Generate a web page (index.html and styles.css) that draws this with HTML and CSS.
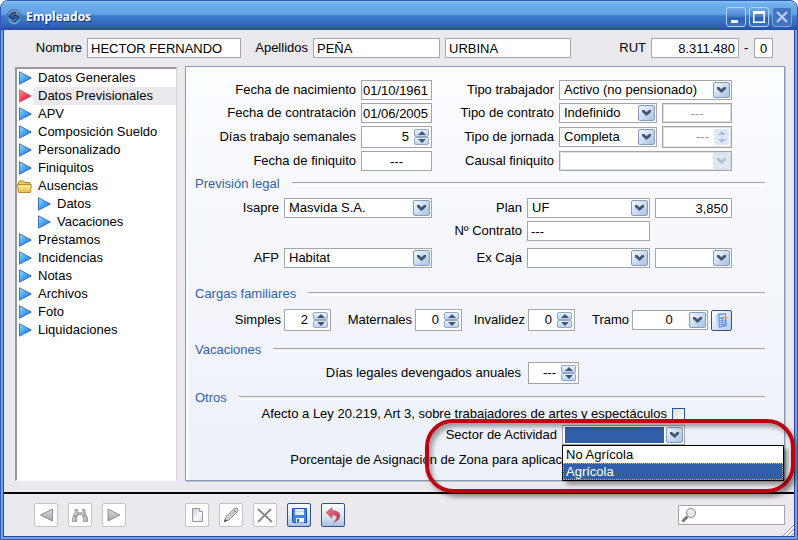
FILE: index.html
```html
<!DOCTYPE html>
<html lang="es">
<head>
<meta charset="utf-8">
<title>Empleados</title>
<link rel="stylesheet" href="styles.css">
</head>
<body>
<svg class="defs" aria-hidden="true">
  <defs>
    <linearGradient id="g-blue" x1="0" y1="0" x2="1" y2="1"><stop offset="0" stop-color="#a8dcff"/><stop offset=".5" stop-color="#3fa0f8"/><stop offset="1" stop-color="#1f7cf0"/></linearGradient>
    <linearGradient id="g-red" x1="0" y1="0" x2="1" y2="1"><stop offset="0" stop-color="#ffa0a0"/><stop offset=".5" stop-color="#f83c48"/><stop offset="1" stop-color="#e01828"/></linearGradient>
    <linearGradient id="g-gray" x1="0" y1="0" x2="0" y2="1"><stop offset="0" stop-color="#dcdcdc"/><stop offset="1" stop-color="#a4a4a4"/></linearGradient>
    <linearGradient id="g-gold" x1="0" y1="0" x2="0" y2="1"><stop offset="0" stop-color="#fff0a0"/><stop offset="1" stop-color="#e8bc48"/></linearGradient>
    <linearGradient id="g-page" x1="0" y1="0" x2="1" y2="1"><stop offset="0" stop-color="#c8c8d0"/><stop offset=".6" stop-color="#fafafc"/><stop offset="1" stop-color="#dcdce2"/></linearGradient>
    <linearGradient id="g-undo" x1="0" y1="0" x2="1" y2="1"><stop offset="0" stop-color="#f4707c"/><stop offset="1" stop-color="#a83c60"/></linearGradient>
    <linearGradient id="g-orb" x1="0" y1="0" x2="0" y2="1"><stop offset="0" stop-color="#8c9cb8"/><stop offset=".5" stop-color="#3c78b8"/><stop offset="1" stop-color="#68b4e4"/></linearGradient>
  </defs>
  <symbol id="i-blue" viewBox="0 0 13 14"><path d="M.5.8v12.4L12.3 7z" fill="url(#g-blue)" stroke="#3c74b4"/></symbol>
  <symbol id="i-red" viewBox="0 0 13 14"><path d="M.5.8v12.4L12.3 7z" fill="url(#g-red)" stroke="#d06078"/></symbol>
  <symbol id="i-folder" viewBox="0 0 15 13"><path d="M1.5 11.5v-9l1-1.5h4l1 1.5h5.5v2" fill="#f0cc60" stroke="#b08418"/><path d="M1.5 12.5l-1-8h13.8l-.8 8z" fill="url(#g-gold)" stroke="#b88c20"/></symbol>
  <symbol id="i-down" viewBox="0 0 9 6"><path d="M0 0h2l2.500 2.300L7 0h2v2L4.500 6 0 2z"/></symbol>
  <symbol id="i-caret" viewBox="0 0 8 4"><path d="M4 0l4 4H0z"/></symbol>
</svg>

<div class="window">
  <header class="titlebar">
    <svg class="logo" viewBox="0 0 16 16"><circle cx="8" cy="8" r="7.500" fill="url(#g-orb)" stroke="#4470a8" stroke-width=".8"/><path d="M10 3.500L7 3.500 3.500 7.500 7 10.500 9.500 8M6 12.500l3-.2L12.500 8.500 9 5.500 6.500 8" fill="none" stroke="#15305e" stroke-width="1.200"/></svg>
    <h1>Empleados</h1>
    <div class="controls">
      <button type="button" aria-label="Minimizar"><svg viewBox="0 0 20 20"><path d="M5 13h7v3H5z" fill="#fff"/></svg></button>
      <button type="button" aria-label="Maximizar"><svg viewBox="0 0 20 20"><path d="M4 4h12v12H4zM5.500 7v7.500h9V7z" fill="#fff" fill-rule="evenodd"/></svg></button>
      <button type="button" class="dim" aria-label="Cerrar"><svg viewBox="0 0 20 20"><path d="M5 5l10 10M15 5L5 15" stroke="#c3d3ec" stroke-width="2"/></svg></button>
    </div>
  </header>

  <div class="client">
    <div class="person">
      <label for="nombre">Nombre</label>
      <input id="nombre" class="field" value="HECTOR FERNANDO">
      <label for="apellido1">Apellidos</label>
      <input id="apellido1" class="field" value="PEÑA">
      <input class="field" value="URBINA" aria-label="Segundo apellido">
      <label for="rut">RUT</label>
      <input id="rut" class="field num" value="8.311.480">
      <span>-</span>
      <input class="field mid" value="0" aria-label="Dígito verificador">
    </div>

    <div class="main">
      <nav class="tree">
        <a href="#"><svg><use href="#i-blue"/></svg><span>Datos Generales</span></a>
        <a href="#" class="current"><svg><use href="#i-red"/></svg><span>Datos Previsionales</span></a>
        <a href="#"><svg><use href="#i-blue"/></svg><span>APV</span></a>
        <a href="#"><svg><use href="#i-blue"/></svg><span>Composición Sueldo</span></a>
        <a href="#"><svg><use href="#i-blue"/></svg><span>Personalizado</span></a>
        <a href="#"><svg><use href="#i-blue"/></svg><span>Finiquitos</span></a>
        <a href="#" class="folder"><svg><use href="#i-folder"/></svg><span>Ausencias</span></a>
        <a href="#" class="child"><svg><use href="#i-blue"/></svg><span>Datos</span></a>
        <a href="#" class="child"><svg><use href="#i-blue"/></svg><span>Vacaciones</span></a>
        <a href="#"><svg><use href="#i-blue"/></svg><span>Préstamos</span></a>
        <a href="#"><svg><use href="#i-blue"/></svg><span>Incidencias</span></a>
        <a href="#"><svg><use href="#i-blue"/></svg><span>Notas</span></a>
        <a href="#"><svg><use href="#i-blue"/></svg><span>Archivos</span></a>
        <a href="#"><svg><use href="#i-blue"/></svg><span>Foto</span></a>
        <a href="#"><svg><use href="#i-blue"/></svg><span>Liquidaciones</span></a>
      </nav>

      <form class="panel">
        <div class="grid general">
          <label for="nac">Fecha de nacimiento</label>
          <input id="nac" class="field date" value="01/10/1961">
          <label for="trab">Tipo trabajador</label>
          <div class="combo wide"><select id="trab"><option>Activo (no pensionado)</option></select><svg><use href="#i-down"/></svg></div>

          <label for="cont">Fecha de contratación</label>
          <input id="cont" class="field date" value="01/06/2005">
          <label for="tcont">Tipo de contrato</label>
          <div class="combo"><select id="tcont"><option>Indefinido</option></select><svg><use href="#i-down"/></svg></div>
          <input class="field mid" value="---" disabled aria-label="Término de contrato">

          <label for="dias">Días trabajo semanales</label>
          <div class="spin"><input id="dias" value="5"><button type="button" aria-label="Más"><svg><use href="#i-caret"/></svg></button><button type="button" aria-label="Menos"><svg><use href="#i-caret"/></svg></button></div>
          <label for="jorn">Tipo de jornada</label>
          <div class="combo"><select id="jorn"><option>Completa</option></select><svg><use href="#i-down"/></svg></div>
          <div class="spin off"><input value="---" disabled aria-label="Horas de jornada"><button type="button" disabled aria-label="Más"><svg><use href="#i-caret"/></svg></button><button type="button" disabled aria-label="Menos"><svg><use href="#i-caret"/></svg></button></div>

          <label for="fin">Fecha de finiquito</label>
          <input id="fin" class="field mid" value="---">
          <label for="causal">Causal finiquito</label>
          <div class="combo wide off"><select id="causal" disabled><option></option></select><svg><use href="#i-down"/></svg></div>
        </div>

        <h2>Previsión legal</h2>
        <div class="grid legal">
          <label for="isapre">Isapre</label>
          <div class="combo"><select id="isapre"><option>Masvida S.A.</option></select><svg><use href="#i-down"/></svg></div>
          <label for="plan">Plan</label>
          <div class="combo"><select id="plan"><option>UF</option></select><svg><use href="#i-down"/></svg></div>
          <input class="field num" value="3,850" aria-label="Valor del plan">

          <label for="ncont" class="third">Nº Contrato</label>
          <input id="ncont" class="field" value="---">

          <label for="afp" class="first">AFP</label>
          <div class="combo"><select id="afp"><option>Habitat</option></select><svg><use href="#i-down"/></svg></div>
          <label for="excaja">Ex Caja</label>
          <div class="combo"><select id="excaja"><option></option></select><svg><use href="#i-down"/></svg></div>
          <div class="combo"><select aria-label="Régimen Ex Caja"><option></option></select><svg><use href="#i-down"/></svg></div>
        </div>

        <h2>Cargas familiares</h2>
        <div class="grid cargas">
          <label for="simples">Simples</label>
          <div class="spin"><input id="simples" value="2"><button type="button" aria-label="Más"><svg><use href="#i-caret"/></svg></button><button type="button" aria-label="Menos"><svg><use href="#i-caret"/></svg></button></div>
          <label for="mat">Maternales</label>
          <div class="spin"><input id="mat" value="0"><button type="button" aria-label="Más"><svg><use href="#i-caret"/></svg></button><button type="button" aria-label="Menos"><svg><use href="#i-caret"/></svg></button></div>
          <label for="inv">Invalidez</label>
          <div class="spin"><input id="inv" value="0"><button type="button" aria-label="Más"><svg><use href="#i-caret"/></svg></button><button type="button" aria-label="Menos"><svg><use href="#i-caret"/></svg></button></div>
          <label for="tramo">Tramo</label>
          <div class="combo center"><select id="tramo"><option>0</option></select><svg><use href="#i-down"/></svg></div>
          <button type="button" class="calc" aria-label="Calcular tramo"><svg viewBox="0 0 13 17"><path d="M3 1.500l8-.5 1 13-8 2z" fill="#6d9bea"/><path d="M1 3l2-1.500L4 16l-2-1z" fill="#b9d0f5"/><path d="M4.500 3l5.500-.5.200 2.500-5.500.5z" fill="#c9e0ff"/><path d="M5 7.500h1.500M8 7.300h2M5 9.500h1.500M8 9.300h1.500M5.200 11.500h1.500M8.200 11.300h1.500M5.400 13.500h1.500" stroke="#eaf3ff"/><path d="M9 5h3v2H9z" fill="#f0a050"/></svg></button>
        </div>

        <h2 class="tight">Vacaciones</h2>
        <div class="grid vac">
          <label for="legales">Días legales devengados anuales</label>
          <div class="spin"><input id="legales" value="---"><button type="button" aria-label="Más"><svg><use href="#i-caret"/></svg></button><button type="button" aria-label="Menos"><svg><use href="#i-caret"/></svg></button></div>
        </div>

        <h2 class="tight close">Otros</h2>
        <div class="others">
          <div class="law"><label for="afecto">Afecto a Ley 20.219, Art 3, sobre trabajadores de artes y espectáculos</label><input type="checkbox" id="afecto"></div>
          <div class="sector">
            <label for="sector">Sector de Actividad</label>
            <div class="combo open">
              <select id="sector"><option></option></select><svg><use href="#i-down"/></svg>
              <ul class="menu" role="listbox" aria-label="Sector de Actividad">
                <li role="option">No Agrícola</li>
                <li role="option" class="picked" aria-selected="true">Agrícola</li>
              </ul>
            </div>
            <div class="callout"></div>
          </div>
          <div class="zone">Porcentaje de Asignación de Zona para aplicac</div>
        </div>
      </form>
    </div>

    <footer class="toolbar">
      <div class="tools">
        <button type="button" aria-label="Anterior"><svg viewBox="0 0 22 22"><path d="M17.500 5v12L5.500 11z" fill="url(#g-gray)" stroke="#909090"/></svg></button>
        <button type="button" aria-label="Buscar"><svg viewBox="0 0 22 22"><path d="M6 5h3v3h4V5h3l1 5 2 4v4h-5v-5h-1v-2H9v2H8v5H3v-4l2-4z" fill="#a5a5a8"/><path d="M7 7v4M5 13v4M14 7v4M16 13v4M10 9h2" stroke="#e8e8ea"/></svg></button>
        <button type="button" aria-label="Siguiente"><svg viewBox="0 0 22 22"><path d="M5 5v12l12-6z" fill="url(#g-gray)" stroke="#909090"/></svg></button>
      </div>
      <div class="tools">
        <button type="button" aria-label="Nuevo"><svg viewBox="0 0 22 22"><path d="M6.500 4.500h7l3 3v10h-10z" fill="url(#g-page)" stroke="#9494a4"/><path d="M13.500 4.500v3h3" fill="#fff" stroke="#9494a4"/></svg></button>
        <button type="button" aria-label="Editar"><svg viewBox="0 0 22 22"><path d="M4.500 17.500l1.500-5 8.500-8q2-1 3 0t0 3L9 16z" fill="#d4d4d4" stroke="#858585"/><path d="M8 14l7-7" stroke="#b5b5b5"/><path d="M4 18l1-3 2 2z" fill="#444"/><path d="M13 5l3.500 3.500" stroke="#777"/></svg></button>
        <button type="button" aria-label="Eliminar"><svg viewBox="0 0 22 22"><path d="M4 5l14 13M17 5L4 18" stroke="#858585" stroke-width="1.800" fill="none"/></svg></button>
        <button type="button" class="on" aria-label="Guardar"><svg viewBox="0 0 22 22"><path d="M4.500 4.500h14v14h-13l-1-1z" fill="#3f83f0" stroke="#1d4cb0"/><path d="M7 5h9v6H7z" fill="#e5f1ff"/><path d="M8 14h8v4.500H8z" fill="#f4f4f4"/><path d="M9 15h2v3H9z" fill="#2c5cc0"/><path d="M7 7.500h9" stroke="#bcd8f8"/></svg></button>
        <button type="button" class="on" aria-label="Deshacer"><svg viewBox="0 0 22 22"><path d="M4 8.500l6-5v3q8 0 8 5.500 0 4-6.500 6.500 3.500-3.500 3-5.500-.5-2.200-4.500-2v3.500z" fill="url(#g-undo)" stroke="#c45a70" stroke-width=".6"/></svg></button>
      </div>
      <label class="search"><svg viewBox="0 0 16 16"><path d="M1.500 14.500l5-5" stroke="#777" stroke-width="3"/><circle cx="10" cy="6" r="4.500" fill="#e6e6e6" stroke="#8c8c8c"/><path d="M8 4.500l2-1" stroke="#fff" stroke-width="1.500"/></svg><input type="text" aria-label="Buscar empleado"></label>
      <svg class="grip" viewBox="0 0 12 12"><path d="M1 12L12 1M5 12l7-7M9 12l3-3" stroke="#9a989c"/><path d="M2.500 12L12 2.500M6.500 12L12 6.500" stroke="#fff"/></svg>
    </footer>
  </div>
</div>
</body>
</html>
```

FILE: styles.css
```css
* { box-sizing: border-box; }
body { margin: 0; background: #fff; color: #000; font: 13px/16px "Liberation Sans", Arial, sans-serif; }
input, select, button { font: inherit; color: inherit; margin: 0; padding: 0; }
.defs { position: absolute; width: 0; height: 0; }

.window {
  display: flex; flex-direction: column; min-height: 100vh; overflow: hidden;
  padding: 0 2px 2px; background: #73a2e2;
  border: 1px solid #3058b4; border-radius: 8px 8px 0 0;
}

/* Title bar */
.titlebar {
  display: flex; align-items: center; height: 29px; flex: none;
  margin: 0 -2px; padding: 2px 5px 0;
  background: linear-gradient(#8cc4f0 0, #6cb0ea 3px, #62a2e6 13px, #3c7ccc 15px, #3870c4 20px, #2c58b0 27px, #2448a0 29px);
}
.logo { width: 16px; height: 16px; }
.titlebar h1 {
  flex: 1; margin: 0 0 0 4px; color: #fff;
  font: bold 12px/18px "Open Sans", "Noto Sans", sans-serif;
  text-shadow: 1px 1px 0 #14307c;
}
.controls { display: flex; gap: 3px; }
.controls button {
  width: 20px; height: 20px; border: 1px solid #b4d0f2; border-radius: 3px;
  background: linear-gradient(#74a8e6, #4c84d0 45%, #2c60b4 55%, #3c74c4);
}
.controls .dim { border-color: #7ca4dc; background: #4474c0; }
.controls svg { display: block; width: 20px; height: 20px; margin: -1px; }

.client { flex: 1; display: flex; flex-direction: column; background: #ebe9ed; border: 1px solid #2448a0; border-top: 0; }

/* Inputs */
.field, .spin, .combo { width: 100%; height: 20px; border: 1px solid #a5a5a9; background: #fff; }
.field { padding: 0 3px; outline: 0; min-width: 0; }
.field:disabled, .off { color: #97979b; box-shadow: inset 0 0 0 1px #dededf; }
.num { text-align: right; }
.mid { text-align: center; }
.date { padding: 0 1px; }

.combo { position: relative; }
.combo select { width: 100%; height: 18px; padding: 0 19px 0 4px; appearance: none; border: 0; background: none; outline: 0; opacity: 1; }
.combo > svg {
  position: absolute; top: 1px; right: 1px; width: 17px; height: 16px; padding: 4px 3px 4px; pointer-events: none;
  border: 1px solid #809cc0; border-radius: 2px; fill: #46546c;
  background: linear-gradient(135deg, #f4f9ff, #c2d6ee 60%, #a8c4e6);
}
.combo.off > svg { border-color: #d4e2f4; background: #dce8f6; fill: #bcbcb8; }
.combo.center select { text-align: center; text-align-last: center; padding-left: 17px; }

.spin { display: grid; grid-template-columns: 1fr 15px; grid-template-rows: 8px 8px; column-gap: 5px; height: 22px; padding: 2px; }
.spin input { grid-row: 1 / 3; min-width: 0; width: 100%; border: 0; background: none; text-align: right; outline: 0; }
.spin button {
  display: grid; place-items: center; border: 1px solid #8ca8cc; border-radius: 2px;
  background: linear-gradient(#eaf3fd, #bcd2ec);
}
.spin svg { width: 8px; height: 4px; fill: #46546c; }
.spin button + button svg { transform: rotate(180deg); }
.spin.off button { border-color: #dce8f6; background: #dce8f6; }
.spin.off svg { fill: #a8bcd8; }

/* Person strip */
.person {
  display: grid; grid-template-columns: 78px 154px 62px 127px 126px 1fr 88px 5px 19px;
  column-gap: 5px; align-items: center; padding: 8px 21px 8px 0; height: 36px;
}
.person label { text-align: right; }

/* Main area */
.main { flex: 1; display: flex; gap: 8px; padding: 0 9px 11px 11px; }
.tree { flex: 0 0 162px; margin-top: 1px; background: #fff; border: 2px solid #99999d; border-right: 1px solid #d6d4d8; border-bottom: 1px solid #fff; }
.tree a { display: flex; align-items: center; height: 18px; gap: 6px; padding-left: 2px; color: #000; text-decoration: none; }
.tree svg { flex: none; width: 13px; height: 14px; }
.tree span { flex: 1; }
.tree .current { background: linear-gradient(90deg, #fff 16px, #ebe9ed 16px); }
.tree .child { padding-left: 21px; }
.tree .folder { padding-left: 0; }
.tree .folder svg { width: 15px; height: 13px; }

.panel {
  flex: 1; min-width: 0; padding: 13px 19px 0 9px;
  border: 1px solid #839cb9;
  background: linear-gradient(#fcfdff, #f4f6fb 50%, #ecf0f9);
  box-shadow: inset 3px 0 0 #fbfcff, 1px 1px 0 #c4c4c8;
}
.grid { display: grid; column-gap: 5px; padding-right: 33px; align-items: center; }
.grid label { text-align: right; white-space: nowrap; }
.general { grid-template-columns: 1fr 71px 117px 98px 70px; row-gap: 3px; }
.general .wide { grid-column: 4 / 6; }
.legal { grid-template-columns: 1fr 148px 85px 123px 77px; grid-template-rows: 20px 24px 20px; row-gap: 3px; align-items: start; }
.legal label { line-height: 20px; }
.legal .third { grid-column: 3; }
.legal .first { grid-column: 1; }
.cargas { grid-template-columns: 1fr 47px 78px 47px 60px 47px 51px 76px 21px; column-gap: 3px; }
.vac { grid-template-columns: 1fr 51px; column-gap: 7px; padding-right: 186px; }

h2 { display: flex; align-items: center; gap: 12px; margin: 5px 0 6px; color: #3460a8; font: inherit; }
h2::after { content: ""; flex: 1; height: 2px; border-top: 1px solid #a5a5a9; border-bottom: 1px solid #fff; }
.legal + h2 { margin-top: 18px; }
.cargas { margin-top: 7px; }
h2.tight { margin: 11px 0 4px; }
h2.close { margin: 6px 0 0; }

.law { display: flex; justify-content: flex-end; align-items: center; gap: 5px; height: 16px; padding-right: 80px; }
.law input {
  appearance: none; width: 13px; height: 13px; border: 1px solid #24548c;
  background: linear-gradient(135deg, #dcdcd8, #fff);
}
.sector { position: relative; display: grid; grid-template-columns: 1fr 123px; column-gap: 5px; align-items: center; padding-right: 80px; margin-top: 3px; }
.sector label { text-align: right; }
.open select { background: #325fa9 content-box; padding: 1px 20px 1px 2px; }
.menu {
  position: absolute; z-index: 3; top: 19px; left: -1px; width: 222px; margin: 0; padding: 0;
  list-style: none; background: #fff; border: 1px solid #000; box-shadow: 4px 4px 4px rgba(0, 0, 0, .35);
}
.menu li { height: 17px; padding-left: 3px; line-height: 17px; }
.menu .picked { background: #325fa9; color: #fff; outline: 1px dotted #c8b070; outline-offset: -1px; }
.callout {
  position: absolute; z-index: 2; top: -6px; right: -30px; width: 370px; height: 74px; pointer-events: none;
  border: 4px solid #bc0410; border-radius: 28px;
  box-shadow: 3px 4px 4px rgba(0, 0, 0, .4), inset 3px 4px 4px rgba(0, 0, 0, .35);
}
.zone { margin-top: 7px; padding-right: 203px; text-align: right; white-space: nowrap; }

/* Bottom toolbar */
.toolbar { position: relative; display: flex; align-items: center; height: 44px; padding: 0 9px 0 30px; border-top: 2px solid #000; }
.tools { display: flex; gap: 10px; margin-right: 59px; }
.tools button { width: 24px; height: 24px; border: 1px solid #c2c2c8; border-radius: 2px; background: #fff; }
.tools .on { border-color: #2c5490; background: linear-gradient(#fff, #d8e4f4 60%, #a8c0e0); }
.tools svg { display: block; width: 22px; height: 22px; }
.search { display: flex; align-items: center; width: 107px; height: 20px; margin-left: auto; padding: 0 2px; border: 1px solid #a5a5a9; background: #fff; }
.search svg { flex: none; width: 16px; height: 16px; }
.search input { min-width: 0; flex: 1; border: 0; outline: 0; }
.grip { position: absolute; right: 0; bottom: 0; width: 12px; height: 12px; }
.calc { width: 21px; height: 21px; border: 1px solid #2c5490; border-radius: 2px; background: linear-gradient(135deg, #fff, #b8cce6); }
.calc svg { display: block; width: 13px; height: 17px; margin: 0 auto; }
```
